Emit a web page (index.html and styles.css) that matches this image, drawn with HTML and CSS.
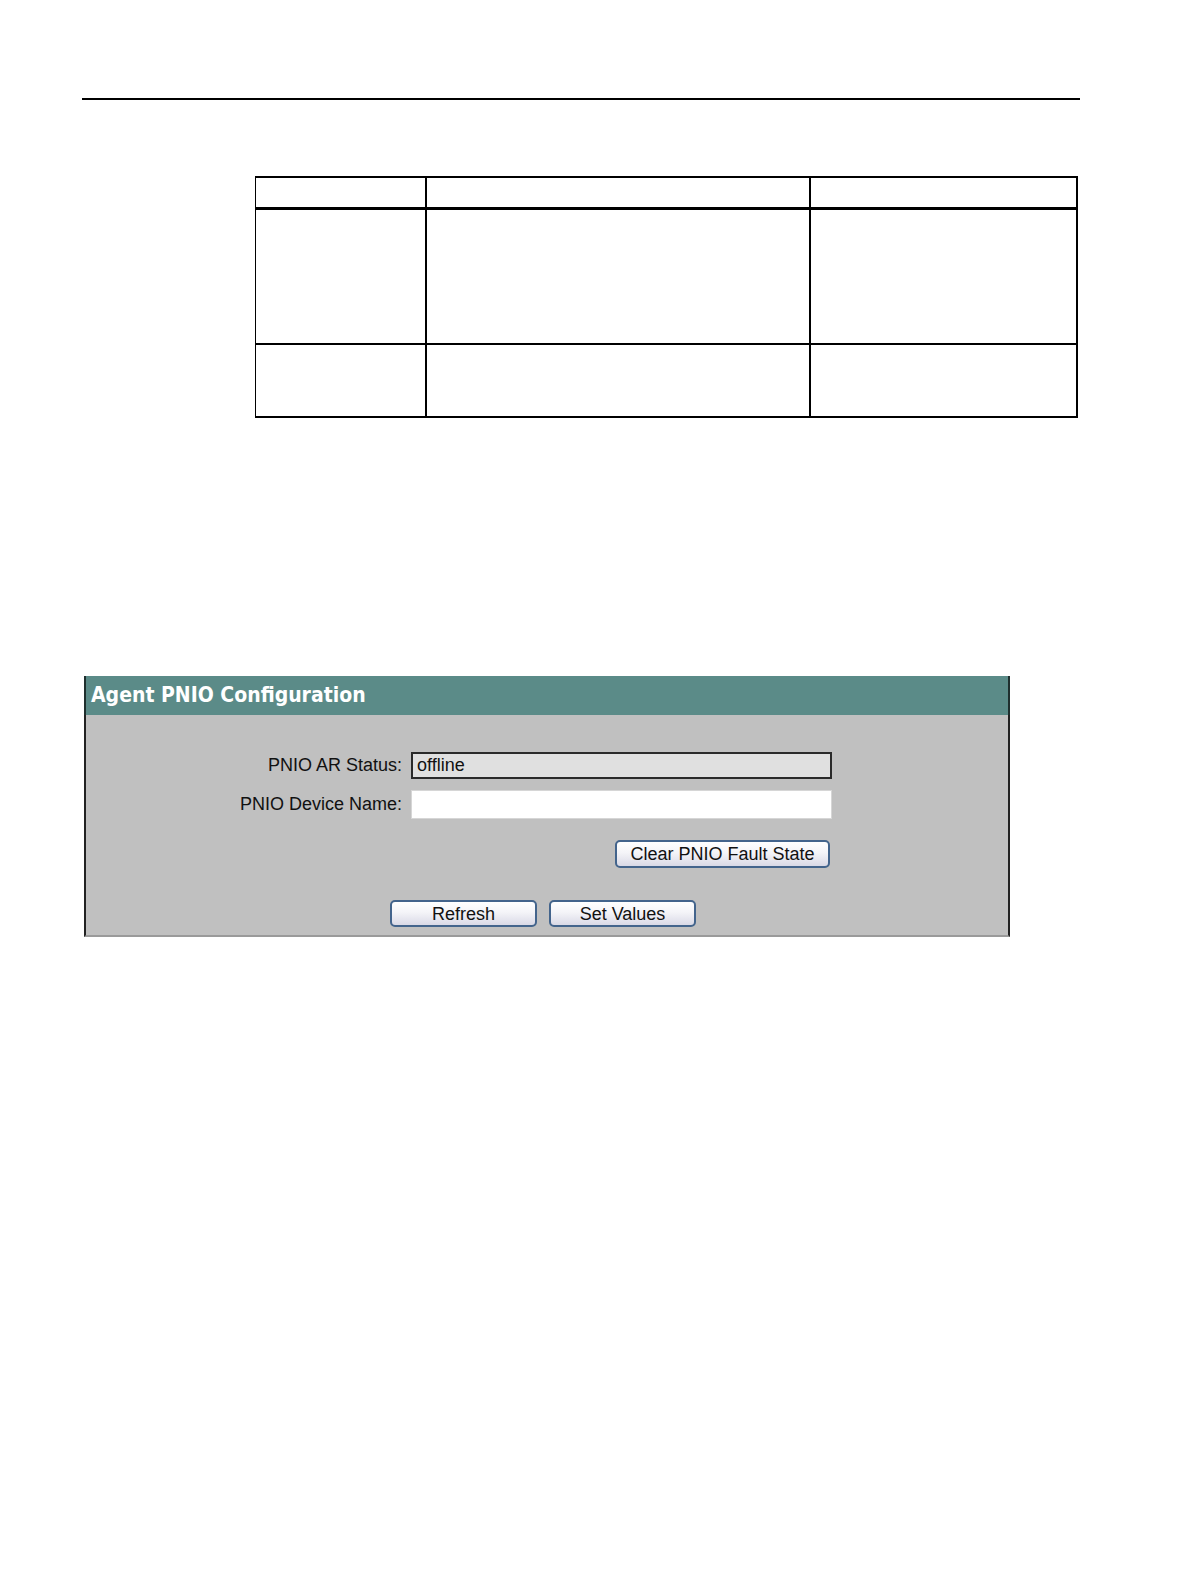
FILE: index.html
```html
<!DOCTYPE html>
<html>
<head>
<meta charset="utf-8">
<link rel="stylesheet" href="styles.css">
</head>
<body>
<div class="page">
  <div class="rule"></div>
  <div class="spec">
    <div class="row head">
      <div class="cell c1"></div>
      <div class="cell c2"></div>
      <div class="cell c3"></div>
    </div>
    <div class="row r1">
      <div class="cell c1"></div>
      <div class="cell c2"></div>
      <div class="cell c3"></div>
    </div>
    <div class="row r2">
      <div class="cell c1"></div>
      <div class="cell c2"></div>
      <div class="cell c3"></div>
    </div>
  </div>

  <div class="panel">
    <div class="panel-head">Agent PNIO Configuration</div>
    <div class="panel-body">
      <div class="form">
        <label class="lbl">PNIO AR Status:</label>
        <div class="field field-ro">offline</div>
        <label class="lbl">PNIO Device Name:</label>
        <div class="field field-edit"></div>
        <div class="clear-row"><button class="btn btn-clear">Clear PNIO Fault State</button></div>
      </div>
      <div class="actions">
        <button class="btn btn-act">Refresh</button>
        <button class="btn btn-act">Set Values</button>
      </div>
    </div>
  </div>
</div>
</body>
</html>
```

FILE: styles.css
```css
html, body {
  margin: 0;
  padding: 0;
  background: #ffffff;
}
.page {
  padding-top: 98px;
  font-family: "Liberation Sans", Arial, sans-serif;
}
.rule {
  margin-left: 82px;
  width: 998px;
  height: 2px;
  background: #000;
}
.spec {
  margin-top: 76px;
  margin-left: 255px;
  width: 823px;
  box-sizing: border-box;
  border: 2px solid #000;
  border-left-width: 1px;
}
.row {
  display: grid;
  grid-template-columns: 169px 384px 266px;
  border-bottom: 2px solid #000;
}
.row.head {
  height: 29px;
  border-bottom: 3px solid #000;
}
.row.r1 { height: 133px; }
.row.r2 { height: 71px; border-bottom: none; }
.cell + .cell { border-left: 2px solid #000; }

.panel {
  margin-top: 258px;
  margin-left: 84px;
  width: 926px;
}
.panel-head {
  height: 39px;
  box-sizing: border-box;
  background: #5b8b88;
  border-left: 2px solid #1f2f2e;
  border-right: 2px solid #1f2f2e;
  color: #ffffff;
  font-family: "DejaVu Sans Condensed", "DejaVu Sans", sans-serif;
  font-weight: bold;
  font-size: 21px;
  line-height: 38px;
  padding-left: 5px;
  white-space: nowrap;
}
.panel-body {
  background: #c0c0c0;
  border-left: 2px solid #222;
  border-right: 2px solid #222;
  border-bottom: 2px solid #9a9a9a;
  padding-top: 37px;
  padding-bottom: 8px;
  font-size: 18px;
  color: #111;
}
.form {
  display: grid;
  grid-template-columns: 316px 421px;
  column-gap: 9px;
  row-gap: 11px;
  align-items: center;
}
.lbl {
  text-align: right;
  white-space: nowrap;
}
.field {
  box-sizing: border-box;
  padding-left: 4px;
  line-height: 23px;
}
.field-ro {
  height: 27px;
  background: #e0e0e0;
  border: 2px solid #2a2a2a;
}
.field-edit {
  height: 29px;
  background: #ffffff;
  border: 1px solid #d6d6d6;
}
.clear-row {
  grid-column: 2;
  display: flex;
  justify-content: flex-end;
  padding-right: 2px;
  margin-top: 10px;
}
.btn {
  box-sizing: border-box;
  font-family: "Liberation Sans", Arial, sans-serif;
  font-size: 18px;
  color: #111;
  border: 2px solid #43648c;
  border-radius: 5px;
  background: linear-gradient(#ffffff 0%, #f4f4f8 45%, #d9d9e6 100%);
  padding: 0;
  line-height: 22px;
}
.btn-clear {
  width: 215px;
  height: 28px;
}
.actions {
  display: flex;
  justify-content: center;
  gap: 12px;
  margin-top: 32px;
  padding-right: 8px;
}
.btn-act {
  width: 147px;
  height: 27px;
}
```
